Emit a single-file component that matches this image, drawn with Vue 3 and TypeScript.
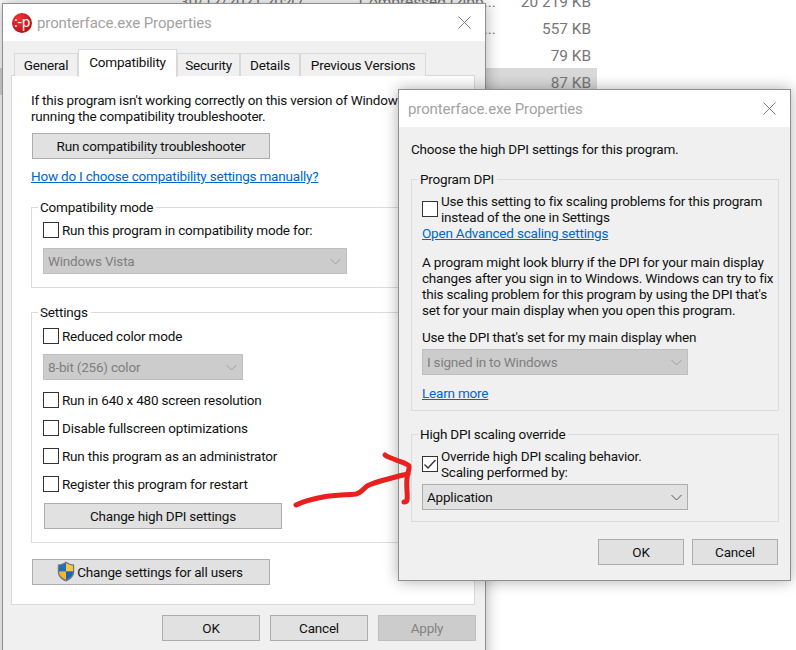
<script setup lang="ts">
const rows = [
  { date: '30/12/2021 20:47', type: 'Compressed (zipp...', size: '20 219 KB', on: false },
  { date: '', type: 'Compressed (zipp...', size: '557 KB', on: false },
  { date: '', type: '', size: '79 KB', on: false },
  { date: '', type: '', size: '87 KB', on: true },
]
const tabs = ['General', 'Compatibility', 'Security', 'Details', 'Previous Versions']
const tabWidths = [64, 99, 63, 60, 126]
const lowerChecks = [
  'Run in 640 x 480 screen resolution',
  'Disable fullscreen optimizations',
  'Run this program as an administrator',
  'Register this program for restart',
]
</script>

<template>
  <div class="desk">
    <div class="files">
      <div v-for="(r, i) in rows" :key="i" class="file" :class="{ on: r.on }">
        <span class="date">{{ r.date }}</span>
        <span class="type">{{ r.type }}</span>
        <span class="size">{{ r.size }}</span>
      </div>
    </div>

    <section class="win win-a">
      <header class="title">
        <svg class="app" viewBox="0 0 20 20" width="20" height="20">
          <defs>
            <radialGradient id="ball" cx="35%" cy="30%" r="75%">
              <stop offset="0" stop-color="#f5333a" />
              <stop offset="1" stop-color="#b80d14" />
            </radialGradient>
          </defs>
          <circle cx="10" cy="10" r="10" fill="url(#ball)" />
          <text x="10" y="13.500" text-anchor="middle" class="app-t">:-p</text>
        </svg>
        <span class="title-t">pronterface.exe Properties</span>
        <svg class="close" viewBox="0 0 13 13" width="13" height="13">
          <path d="M.5.5l12 12M12.5.5l-12 12" />
        </svg>
      </header>

      <nav class="tabs">
        <div
          v-for="(t, i) in tabs"
          :key="t"
          class="tab"
          :class="{ active: i === 1 }"
          :style="{ width: tabWidths[i] + 'px' }"
        >{{ t }}</div>
      </nav>

      <div class="panel">
        <p class="intro">If this program isn't working correctly on this version of Windows, try<br />running the compatibility troubleshooter.</p>
        <button class="btn wide first">Run compatibility troubleshooter</button>
        <a class="link how">How do I choose compatibility settings manually?</a>

        <fieldset class="grp g-compat">
          <legend>Compatibility mode</legend>
          <label class="chk"><i class="box"></i>Run this program in compatibility mode for:</label>
          <div class="sel off s-vista">Windows Vista
            <svg class="chev" viewBox="0 0 11 7" width="11" height="7"><path d="M.5 1l5 5 5-5" /></svg>
          </div>
        </fieldset>

        <fieldset class="grp g-settings">
          <legend>Settings</legend>
          <label class="chk"><i class="box"></i>Reduced color mode</label>
          <div class="sel off s-color">8-bit (256) color
            <svg class="chev" viewBox="0 0 11 7" width="11" height="7"><path d="M.5 1l5 5 5-5" /></svg>
          </div>
          <label v-for="c in lowerChecks" :key="c" class="chk spaced"><i class="box"></i>{{ c }}</label>
          <button class="btn wide dpi">Change high DPI settings</button>
        </fieldset>

        <button class="btn wide all">
          <svg class="shield" viewBox="0 0 18 21" width="18" height="21">
            <path d="M9 .5c2.400 1.900 5 2.800 8.200 3v7.200c0 4.500-3.200 7.900-8.200 9.800C4 18.600.8 15.200.8 10.700V3.500C4 3.300 6.600 2.400 9 .5z" fill="#6f7780" />
            <path d="M9 2v8.500H2V4.700C4.700 4.400 6.900 3.500 9 2z" fill="#1d6fc4" />
            <path d="M9 2c2.100 1.500 4.300 2.400 7 2.700v5.800H9z" fill="#f7c83c" />
            <path d="M2 10.500h7v8.300c-4-1.700-6.800-4.300-7-8.300z" fill="#f5b52e" />
            <path d="M9 10.500h7c-.2 4-3 6.600-7 8.300z" fill="#1a63b5" />
          </svg>Change settings for all users
        </button>
      </div>

      <footer class="foot foot-a">
        <button class="btn act">OK</button>
        <button class="btn act">Cancel</button>
        <button class="btn act dis">Apply</button>
      </footer>
    </section>

    <section class="win win-b">
      <header class="title">
        <span class="title-t">pronterface.exe Properties</span>
        <svg class="close" viewBox="0 0 13 13" width="13" height="13">
          <path d="M.5.5l12 12M12.5.5l-12 12" />
        </svg>
      </header>
      <div class="body-b">
        <p class="choose">Choose the high DPI settings for this program.</p>

        <fieldset class="grp g-dpi">
          <legend>Program DPI</legend>
          <label class="chk two"><i class="box"></i><span>Use this setting to fix scaling problems for this program<br />instead of the one in Settings</span></label>
          <a class="link">Open Advanced scaling settings</a>
          <p class="para">A program might look blurry if the DPI for your main display<br />changes after you sign in to Windows. Windows can try to fix<br />this scaling problem for this program by using the DPI that's<br />set for your main display when you open this program.</p>
          <p class="use">Use the DPI that's set for my main display when</p>
          <div class="sel off s-b">I signed in to Windows
            <svg class="chev" viewBox="0 0 11 7" width="11" height="7"><path d="M.5 1l5 5 5-5" /></svg>
          </div>
          <a class="link more">Learn more</a>
        </fieldset>

        <fieldset class="grp g-over">
          <legend>High DPI scaling override</legend>
          <label class="chk two"><i class="box">
            <svg viewBox="0 0 14 14" width="14" height="14"><path d="M1.500 7.500l3.500 3.500 7.500-8" /></svg>
          </i><span>Override high DPI scaling behavior.<br />Scaling performed by:</span></label>
          <div class="sel s-b s-app">Application
            <svg class="chev" viewBox="0 0 11 7" width="11" height="7"><path d="M.5 1l5 5 5-5" /></svg>
          </div>
        </fieldset>

        <footer class="foot foot-b">
          <button class="btn act-b">OK</button>
          <button class="btn act-b">Cancel</button>
        </footer>
      </div>
    </section>

    <svg class="scribble" viewBox="0 0 796 650" width="796" height="650">
      <path d="M296 505c6-3 16-6 27-8 12-2 24-2 33-3 5-1 7-5 11-8 6-3 13-5 21-7 7-2 14-4 20-5" />
      <path d="M385 455c2 2 7 3 11 5 5 2 11 3 13 6 1 3-2 7-2 13-1 8 1 15 0 21-.3 2-2 2-3 2" />
    </svg>
  </div>
</template>

<style>
html, body { margin: 0; background: #fff; }
</style>

<style scoped>
.desk {
  position: relative;
  width: 796px;
  height: 650px;
  overflow: hidden;
  background: #fff;
  font: 13.5px/16px Roboto, "Noto Sans", sans-serif;
  letter-spacing: -.2px;
  color: #111;
}
.files { width: 597px; margin-top: -13px; }
.file {
  display: flex;
  align-items: center;
  height: 27px;
  font-size: 15.4px;
  letter-spacing: 0;
  color: #777;
  padding-top: 2px;
  box-sizing: border-box;
}
.file.on { background: #d9d9d9; }
.date { margin-left: 180px; width: 179px; }
.type { width: 132px; white-space: nowrap; }
.size { flex: 1; text-align: right; padding-right: 6px; }

.win {
  position: absolute;
  box-sizing: border-box;
  border: 1px solid #8f8f8f;
  background: #f0f0f0;
  box-shadow: 0 0 14px rgba(0, 0, 0, .32);
}
.win-a { left: 2px; top: 3px; width: 484px; height: 670px; }
.win-b { left: 398px; top: 89px; width: 393px; height: 492px; }

.title {
  height: 37px;
  background: #fff;
  display: flex;
  align-items: center;
  padding: 0 14px 0 9px;
}
.app { flex: none; margin-right: 5px; margin-top: 1px; }
.app-t { font: 400 14px "Noto Sans", sans-serif; fill: #fff; letter-spacing: -.3px; }
.title-t { font-size: 15px; letter-spacing: -.1px; color: #a3a3a3; flex: 1; padding-top: 1px; }
.close { fill: none; stroke: #7d7d7d; stroke-width: 1; flex: none; }

.tabs {
  display: flex;
  align-items: flex-end;
  height: 27px;
  margin-top: 8px;
  padding-left: 11px;
  position: relative;
  z-index: 1;
  margin-bottom: -1px;
}
.tab {
  box-sizing: border-box;
  height: 23px;
  border: 1px solid #d9d9d9;
  border-bottom: 0;
  background: #f0f0f0;
  text-align: center;
  line-height: 22px;
  flex: none;
}
.tab.active {
  height: 28px;
  margin-bottom: -1px;
  background: #fff;
  line-height: 25px;
}

.panel {
  box-sizing: border-box;
  margin-left: 8px;
  width: 464px;
  height: 530px;
  background: #fff;
  border: 1px solid #d9d9d9;
  padding: 16px 20px 0 19px;
}
p { margin: 0; }
.intro { white-space: nowrap; }

.btn {
  display: block;
  box-sizing: border-box;
  height: 26px;
  margin: 0;
  padding: 0;
  background: #e1e1e1;
  border: 1px solid #adadad;
  font: inherit;
  letter-spacing: inherit;
  color: #111;
  text-align: center;
}
.wide { width: 238px; }
.first { margin: 9px 0 0 1px; }
.link {
  display: block;
  color: #0066cc;
  text-decoration: underline;
}
.how { margin-top: 9px; }

.grp {
  margin: 0;
  min-width: 0;
  border: 1px solid #dcdcdc;
}
.grp legend { padding: 0 3px 0 2px; margin-left: -5px; line-height: 16px; }
.g-dpi legend, .g-over legend { margin-left: -4px; }
.g-compat { margin-top: 15px; padding: 7px 11px 13px; }
.g-settings { margin-top: 16px; padding: 8px 11px 13px; }

.chk { display: flex; align-items: center; height: 16px; white-space: nowrap; }
.chk.spaced { margin-top: 12px; }
.chk.two { height: 32px; }
.box {
  flex: none;
  box-sizing: border-box;
  display: flex;
  align-items: center;
  justify-content: center;
  width: 16px;
  height: 16px;
  margin-right: 3px;
  background: #fff;
  border: 1px solid #333;
}
.box svg { fill: none; stroke: #333; stroke-width: 1.4; }

.sel {
  box-sizing: border-box;
  display: flex;
  align-items: center;
  height: 26px;
  margin-top: 10px;
  padding-left: 4px;
  background: #e1e1e1;
  border: 1px solid #adadad;
  position: relative;
}
.sel.off { background: #ccc; border-color: #bfbfbf; color: #7f7f7f; }
.chev {
  position: absolute;
  right: 5px;
  top: 9px;
  fill: none;
  stroke: #555;
  stroke-width: 1;
}
.sel.off .chev { stroke: #a0a0a0; }
.s-vista { width: 304px; }
.s-color { width: 200px; }
.dpi { margin: 11px 0 0 1px; }
.all { margin: 16px 0 0 1px; position: relative; padding-left: 18px; }
.shield { position: absolute; left: 24px; top: 1px; }

.foot { display: flex; justify-content: flex-end; gap: 10px; }
.foot-a { margin-top: 10px; width: 473px; }
.act { width: 98px; }
.dis { background: #ccc; border-color: #bfbfbf; color: #838383; }

.body-b { padding: 14px 11px 0 12px; }
.g-dpi { margin-top: 14px; padding: 6px 10px 9px; }
.para { margin-top: 13px; white-space: nowrap; }
.use { margin-top: 11px; white-space: nowrap; }
.s-b { width: 266px; margin-top: 4px; }
.more { margin-top: 10px; }
.g-over { margin-top: 15px; padding: 6px 10px 11px; }
.s-app { margin-top: 4px; }
.foot-b { margin-top: 17px; gap: 8px; width: 367px; }
.act-b { width: 86px; }

.scribble {
  position: absolute;
  left: 0;
  top: 0;
  fill: none;
  stroke: #e8201f;
  stroke-width: 5;
  stroke-linecap: round;
  stroke-linejoin: round;
  pointer-events: none;
}
</style>
